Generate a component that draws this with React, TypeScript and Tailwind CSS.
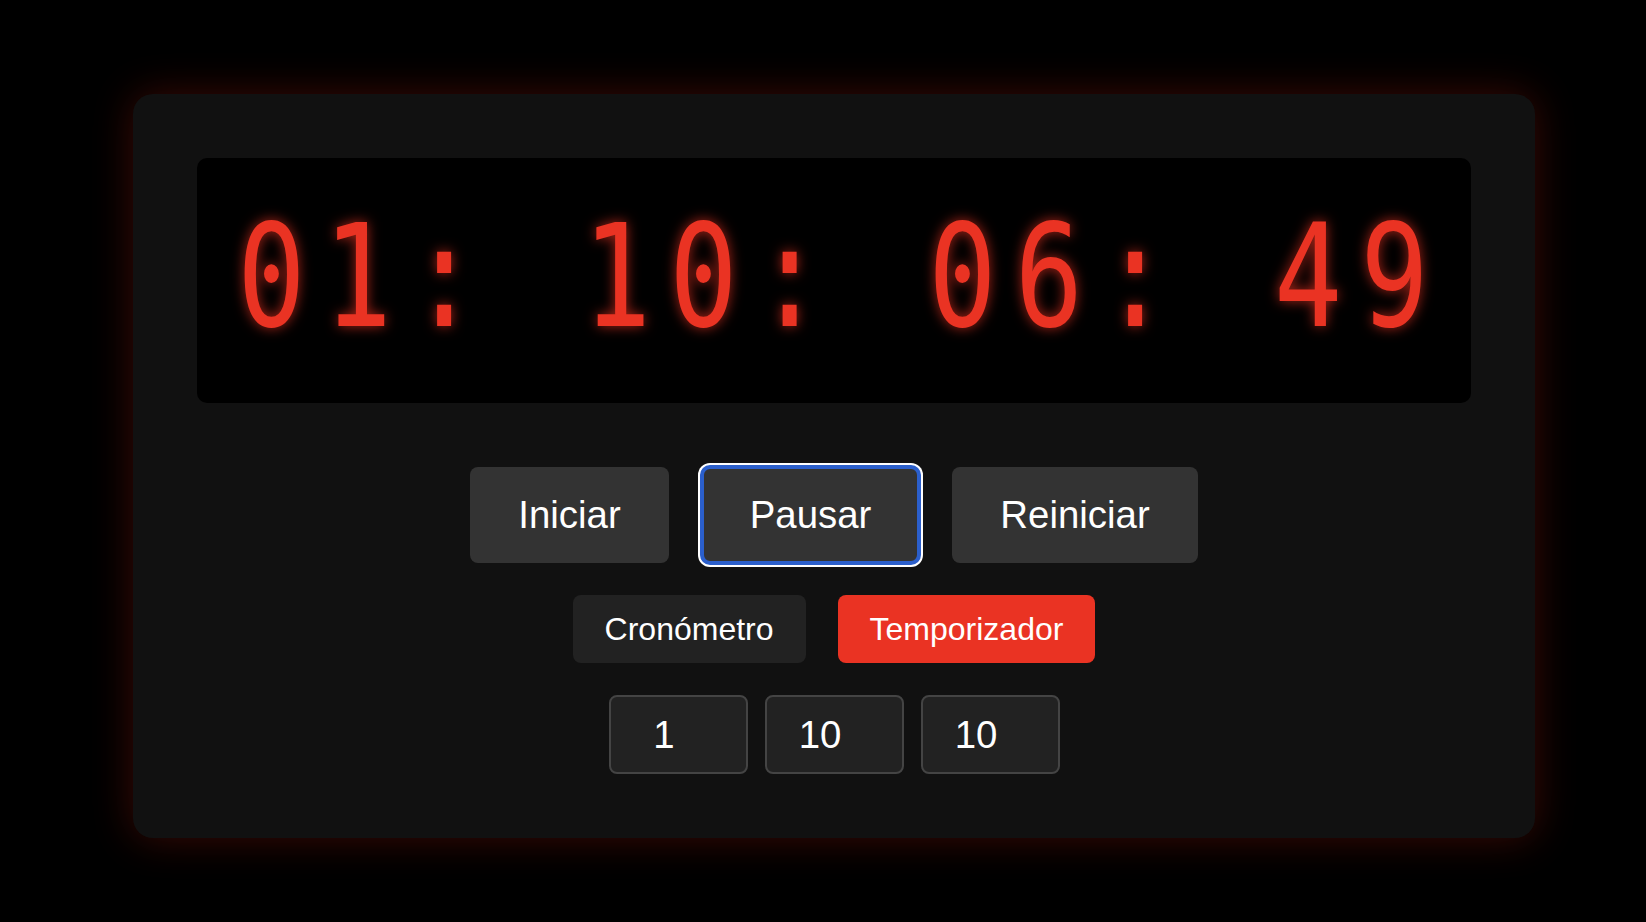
import { useState } from 'react';

const timeParts = ['01', '10', '06', '49'];

function Display() {
  return (
    <div className="h-[245px] rounded-[10px] bg-black flex items-center justify-center pb-[8px] pl-[16px]">
      <span
        className="text-[142px] leading-none whitespace-pre text-[#ea3323] tracking-[22.5px] scale-x-80 [text-shadow:0_0_14px_rgba(234,51,35,0.75)]"
        style={{ fontFamily: '"DejaVu Sans Mono", monospace' }}
      >
        {timeParts.join(': ')}
      </span>
    </div>
  );
}

function App() {
  const [mode, setMode] = useState<'crono' | 'timer'>('timer');
  const [values] = useState(['1', '10', '10']);

  return (
    <div
      className="min-h-screen bg-black pl-[133px] pt-[94px]"
      style={{ fontFamily: '"Liberation Sans", Arial, sans-serif' }}
    >
      <div className="w-[1402px] rounded-[20px] bg-[#111111] p-16 shadow-[0_0_40px_rgba(234,40,20,0.25)]">
        <Display />

        <div className="mt-16 flex flex-col items-center gap-8">
          <div className="flex items-center gap-[33px]">
            <button className="rounded-lg bg-[#333333] px-12 py-[26px] text-[38.4px] leading-[44px] text-white">
              Iniciar
            </button>
            <button className="rounded-lg bg-[#333333] px-12 py-[26px] text-[38.4px] leading-[44px] text-white outline-4 outline-offset-[-2px] outline-[#2b5fcc] shadow-[0_0_0_4px_#ffffff]">
              Pausar
            </button>
            <button className="rounded-lg bg-[#333333] px-12 py-[26px] text-[38.4px] leading-[44px] text-white">
              Reiniciar
            </button>
          </div>

          <div className="flex items-center gap-8">
            <button
              onClick={() => setMode('crono')}
              className={`rounded-lg px-8 py-4 text-[32px] leading-[36px] text-white ${mode === 'crono' ? 'bg-[#ea3323]' : 'bg-[#222222]'}`}
            >
              Cronómetro
            </button>
            <button
              onClick={() => setMode('timer')}
              className={`rounded-lg px-8 py-4 text-[32px] leading-[36px] text-white ${mode === 'timer' ? 'bg-[#ea3323]' : 'bg-[#222222]'}`}
            >
              Temporizador
            </button>
          </div>

          <div className="flex items-center gap-[17px]">
            {values.map((v, i) => (
              <input
                key={i}
                defaultValue={v}
                className="h-[79px] w-[139px] rounded-lg border-2 border-[#444444] bg-[#222222] pl-2 pr-[36px] text-center text-[38.4px] text-white outline-none"
              />
            ))}
          </div>
        </div>
      </div>
    </div>
  );
}

export default App;
